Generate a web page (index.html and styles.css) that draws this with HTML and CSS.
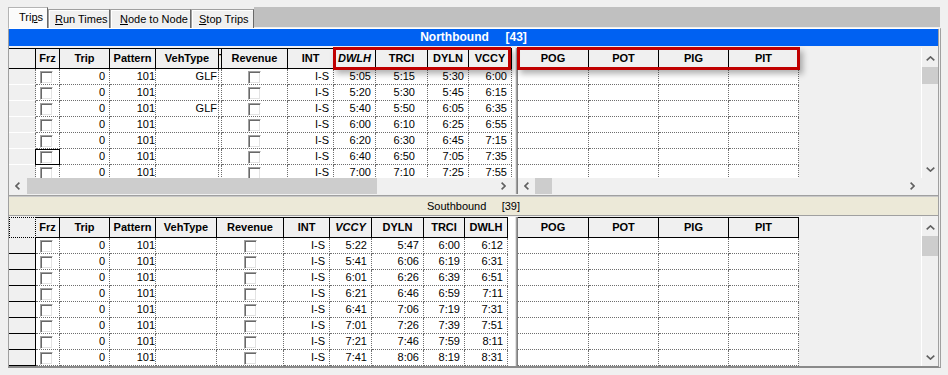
FILE: index.html
```html
<!DOCTYPE html>
<html>
<head>
<meta charset="utf-8">
<link rel="stylesheet" href="styles.css">
</head>
<body>
<div class="app">
  <div class="tabstrip">
    <div class="tab active t1">Tri<u>p</u>s</div>
    <div class="tab t2"><u>R</u>un Times</div>
    <div class="tab t3"><u>N</u>ode to Node</div>
    <div class="tab t4"><u>S</u>top Trips</div>
    <div class="tabfill"></div>
  </div>
  <div class="panel">
    <div class="bar bar-north">Northbound     [43]</div>
    <div class="gap"></div>
    <div class="section north">
      <div class="lpane grid nl">
        <div class="row hd"><div class="h"></div><div class="h">Frz</div><div class="h">Trip</div><div class="h">Pattern</div><div class="h">VehType</div><div class="h nar">T</div><div class="h">Revenue</div><div class="h">INT</div><div class="h it">DWLH</div><div class="h">TRCI</div><div class="h">DYLN</div><div class="h">VCCY</div></div>
        <div class="row"><div class="rh"></div><div class="c cbf"><span class="cb"></span></div><div class="c">0</div><div class="c">101</div><div class="c">GLF</div><div class="c"></div><div class="c cbr"><span class="cb"></span></div><div class="c">I-S</div><div class="c">5:05</div><div class="c">5:15</div><div class="c">5:30</div><div class="c">6:00</div></div>
        <div class="row"><div class="rh"></div><div class="c cbf"><span class="cb"></span></div><div class="c">0</div><div class="c">101</div><div class="c"></div><div class="c"></div><div class="c cbr"><span class="cb"></span></div><div class="c">I-S</div><div class="c">5:20</div><div class="c">5:30</div><div class="c">5:45</div><div class="c">6:15</div></div>
        <div class="row"><div class="rh"></div><div class="c cbf"><span class="cb"></span></div><div class="c">0</div><div class="c">101</div><div class="c">GLF</div><div class="c"></div><div class="c cbr"><span class="cb"></span></div><div class="c">I-S</div><div class="c">5:40</div><div class="c">5:50</div><div class="c">6:05</div><div class="c">6:35</div></div>
        <div class="row"><div class="rh"></div><div class="c cbf"><span class="cb"></span></div><div class="c">0</div><div class="c">101</div><div class="c"></div><div class="c"></div><div class="c cbr"><span class="cb"></span></div><div class="c">I-S</div><div class="c">6:00</div><div class="c">6:10</div><div class="c">6:25</div><div class="c">6:55</div></div>
        <div class="row"><div class="rh"></div><div class="c cbf"><span class="cb"></span></div><div class="c">0</div><div class="c">101</div><div class="c"></div><div class="c"></div><div class="c cbr"><span class="cb"></span></div><div class="c">I-S</div><div class="c">6:20</div><div class="c">6:30</div><div class="c">6:45</div><div class="c">7:15</div></div>
        <div class="row"><div class="rh"></div><div class="c cbf focus"><span class="cb"></span></div><div class="c">0</div><div class="c">101</div><div class="c"></div><div class="c"></div><div class="c cbr"><span class="cb"></span></div><div class="c">I-S</div><div class="c">6:40</div><div class="c">6:50</div><div class="c">7:05</div><div class="c">7:35</div></div>
        <div class="row"><div class="rh"></div><div class="c cbf"><span class="cb"></span></div><div class="c">0</div><div class="c">101</div><div class="c"></div><div class="c"></div><div class="c cbr"><span class="cb"></span></div><div class="c">I-S</div><div class="c">7:00</div><div class="c">7:10</div><div class="c">7:25</div><div class="c">7:55</div></div>
      </div>
      <div class="divider"></div>
      <div class="rpane grid rp">
        <div class="row hd"><div class="h">POG</div><div class="h">POT</div><div class="h">PIG</div><div class="h">PIT</div></div>
        <div class="row"><div class="c"></div><div class="c"></div><div class="c"></div><div class="c"></div></div>
        <div class="row"><div class="c"></div><div class="c"></div><div class="c"></div><div class="c"></div></div>
        <div class="row"><div class="c"></div><div class="c"></div><div class="c"></div><div class="c"></div></div>
        <div class="row"><div class="c"></div><div class="c"></div><div class="c"></div><div class="c"></div></div>
        <div class="row"><div class="c"></div><div class="c"></div><div class="c"></div><div class="c"></div></div>
        <div class="row"><div class="c"></div><div class="c"></div><div class="c"></div><div class="c"></div></div>
        <div class="row"><div class="c"></div><div class="c"></div><div class="c"></div><div class="c"></div></div>
      </div>
      <div class="vscroll">
        <div class="vbtn"><svg width="9" height="5" viewBox="0 0 9 5"><path d="M0.7 4.4 L4.5 0.9 L8.3 4.4" fill="none" stroke="#606060" stroke-width="1.6"/></svg></div>
        <div class="vthumb vt-n"></div>
        <div class="vfill"></div>
        <div class="vbtn"><svg width="9" height="5" viewBox="0 0 9 5"><path d="M0.7 0.6 L4.5 4.1 L8.3 0.6" fill="none" stroke="#606060" stroke-width="1.6"/></svg></div>
      </div>
    </div>
    <div class="hrow">
      <div class="hscroll hs-left">
        <div class="hbtn"><svg width="5" height="8" viewBox="0 0 5 8"><path d="M4.4 0.6 L1 4 L4.4 7.4" fill="none" stroke="#606060" stroke-width="1.6"/></svg></div>
        <div class="hthumb ht-left"></div>
        <div class="hfill"></div>
        <div class="hbtn hbtn-end"><svg width="5" height="8" viewBox="0 0 5 8"><path d="M0.6 0.6 L4 4 L0.6 7.4" fill="none" stroke="#606060" stroke-width="1.6"/></svg></div>
      </div>
      <div class="divider"></div>
      <div class="hscroll hs-right">
        <div class="hbtn"><svg width="5" height="8" viewBox="0 0 5 8"><path d="M4.4 0.6 L1 4 L4.4 7.4" fill="none" stroke="#606060" stroke-width="1.6"/></svg></div>
        <div class="hthumb ht-right"></div>
        <div class="hfill"></div>
        <div class="hbtn"><svg width="5" height="8" viewBox="0 0 5 8"><path d="M0.6 0.6 L4 4 L0.6 7.4" fill="none" stroke="#606060" stroke-width="1.6"/></svg></div>
      </div>
      <div class="corner"></div>
    </div>
    <div class="sep"></div>
    <div class="bar bar-south">Southbound     [39]</div>
    <div class="sep2"></div>
    <div class="section south">
      <div class="lpane grid sl">
        <div class="row hd"><div class="h corner-dot"></div><div class="h">Frz</div><div class="h">Trip</div><div class="h">Pattern</div><div class="h">VehType</div><div class="h">Revenue</div><div class="h">INT</div><div class="h it">VCCY</div><div class="h">DYLN</div><div class="h">TRCI</div><div class="h">DWLH</div></div>
        <div class="row"><div class="rh"></div><div class="c cbf"><span class="cb"></span></div><div class="c">0</div><div class="c">101</div><div class="c"></div><div class="c cbr"><span class="cb"></span></div><div class="c">I-S</div><div class="c">5:22</div><div class="c">5:47</div><div class="c">6:00</div><div class="c">6:12</div></div>
        <div class="row"><div class="rh"></div><div class="c cbf"><span class="cb"></span></div><div class="c">0</div><div class="c">101</div><div class="c"></div><div class="c cbr"><span class="cb"></span></div><div class="c">I-S</div><div class="c">5:41</div><div class="c">6:06</div><div class="c">6:19</div><div class="c">6:31</div></div>
        <div class="row"><div class="rh"></div><div class="c cbf"><span class="cb"></span></div><div class="c">0</div><div class="c">101</div><div class="c"></div><div class="c cbr"><span class="cb"></span></div><div class="c">I-S</div><div class="c">6:01</div><div class="c">6:26</div><div class="c">6:39</div><div class="c">6:51</div></div>
        <div class="row"><div class="rh"></div><div class="c cbf"><span class="cb"></span></div><div class="c">0</div><div class="c">101</div><div class="c"></div><div class="c cbr"><span class="cb"></span></div><div class="c">I-S</div><div class="c">6:21</div><div class="c">6:46</div><div class="c">6:59</div><div class="c">7:11</div></div>
        <div class="row"><div class="rh"></div><div class="c cbf"><span class="cb"></span></div><div class="c">0</div><div class="c">101</div><div class="c"></div><div class="c cbr"><span class="cb"></span></div><div class="c">I-S</div><div class="c">6:41</div><div class="c">7:06</div><div class="c">7:19</div><div class="c">7:31</div></div>
        <div class="row"><div class="rh"></div><div class="c cbf"><span class="cb"></span></div><div class="c">0</div><div class="c">101</div><div class="c"></div><div class="c cbr"><span class="cb"></span></div><div class="c">I-S</div><div class="c">7:01</div><div class="c">7:26</div><div class="c">7:39</div><div class="c">7:51</div></div>
        <div class="row"><div class="rh"></div><div class="c cbf"><span class="cb"></span></div><div class="c">0</div><div class="c">101</div><div class="c"></div><div class="c cbr"><span class="cb"></span></div><div class="c">I-S</div><div class="c">7:21</div><div class="c">7:46</div><div class="c">7:59</div><div class="c">8:11</div></div>
        <div class="row"><div class="rh"></div><div class="c cbf"><span class="cb"></span></div><div class="c">0</div><div class="c">101</div><div class="c"></div><div class="c cbr"><span class="cb"></span></div><div class="c">I-S</div><div class="c">7:41</div><div class="c">8:06</div><div class="c">8:19</div><div class="c">8:31</div></div>
      </div>
      <div class="divider"></div>
      <div class="rpane grid rp">
        <div class="row hd"><div class="h">POG</div><div class="h">POT</div><div class="h">PIG</div><div class="h">PIT</div></div>
        <div class="row"><div class="c"></div><div class="c"></div><div class="c"></div><div class="c"></div></div>
        <div class="row"><div class="c"></div><div class="c"></div><div class="c"></div><div class="c"></div></div>
        <div class="row"><div class="c"></div><div class="c"></div><div class="c"></div><div class="c"></div></div>
        <div class="row"><div class="c"></div><div class="c"></div><div class="c"></div><div class="c"></div></div>
        <div class="row"><div class="c"></div><div class="c"></div><div class="c"></div><div class="c"></div></div>
        <div class="row"><div class="c"></div><div class="c"></div><div class="c"></div><div class="c"></div></div>
        <div class="row"><div class="c"></div><div class="c"></div><div class="c"></div><div class="c"></div></div>
        <div class="row"><div class="c"></div><div class="c"></div><div class="c"></div><div class="c"></div></div>
      </div>
      <div class="vscroll">
        <div class="vbtn"><svg width="9" height="5" viewBox="0 0 9 5"><path d="M0.7 4.4 L4.5 0.9 L8.3 4.4" fill="none" stroke="#606060" stroke-width="1.6"/></svg></div>
        <div class="vthumb vt-s"></div>
        <div class="vfill"></div>
        <div class="vbtn"><svg width="9" height="5" viewBox="0 0 9 5"><path d="M0.7 0.6 L4.5 4.1 L8.3 0.6" fill="none" stroke="#606060" stroke-width="1.6"/></svg></div>
      </div>
    </div>
  </div>
  <div class="hl hl1"></div>
  <div class="hl hl2"></div>
</div>
</body>
</html>
```
FILE: styles.css
```css
* { box-sizing: border-box; }
html, body { margin: 0; background: #f0f0f0; }
body { font-family: "Liberation Sans", Arial, sans-serif; font-size: 11px; color: #000; }
.app { position: relative; width: 948px; height: 375px; overflow: hidden; padding: 7px 0 0 8px; }

/* tabs */
.tabstrip { display: flex; align-items: flex-end; height: 21px; width: 932px; }
.tab { height: 19px; padding-top: 3px; line-height: 13px; white-space: nowrap;
  background: #f0f0f0; border: 1px solid #a0a0a0; border-bottom: 0; border-right-color: #696969;
  box-shadow: inset 1px 1px 0 #fff; }
.tab.active { height: 21px; background: #fbfbfb; border-color: #b4b4b4; border-right-color: #696969; }
.t1 { width: 40px; padding-left: 10px; }
.t2 { width: 62px; padding-left: 6px; }
.t3 { width: 81px; padding-left: 9px; }
.t4 { width: 63px; padding-left: 7px; }
.tabfill { flex: 1; align-self: flex-start; height: 20px; background: #c0c0c0; }

/* panel */
.panel { width: 933px; border-top: 1px solid #fff; border-left: 1px solid #a0a0a0;
  border-right: 3px double #a0a0a0; border-bottom: 2px solid #8a8a8a; }
.bar { white-space: pre; text-align: center; }
.bar-north { height: 17px; line-height: 17px; background: #0061f2; color: #fff; font-weight: bold; font-size: 12px; }
.gap { height: 2px; background: #f0f0f0; }
.section { display: flex; }
.north { height: 130px; }
.south { height: 149px; }
.lpane { width: 506px; background: #fff; overflow: hidden; }
.rpane { width: 403px; background: #f0f0f0; overflow: hidden; }
.divider { width: 3px; background: linear-gradient(90deg, #e3e3e3 0 1px, #a0a0a0 1px 2px, #808080 2px 3px); }

/* grid */
.grid .row { display: grid; height: 16px; }
.grid .row.hd { height: 21px; }
.nl .row { grid-template-columns: 27px 24px 50px 46px 63px 3px 66px 46px 42px 52px 41px 43px; width: 503px; }
.sl .row { grid-template-columns: 27px 24px 50px 46px 61px 67px 46px 42px 52px 41px 43px; width: 499px; }
.rp .row { grid-template-columns: 71px 70px 70px 70px; width: 281px; }

.c { background: #fff; border-right: 1px dotted #6e6e6e; border-bottom: 1px dotted #6e6e6e;
  text-align: right; padding-right: 4px; line-height: 15px; white-space: nowrap; }
.h { background: #f0f0f0; border-top: 1px solid #000; border-bottom: 1px solid #000; border-right: 1px solid #000;
  text-align: center; font-weight: bold; line-height: 19px; white-space: nowrap; overflow: hidden; }
.h.nar { text-align: left; padding-left: 0; }
.it { font-style: italic; }
.rh { background: #f0f0f0; border-right: 1px dotted #6e6e6e; border-bottom: 1px solid #fff; }
.sl .rh { border-right: 1px solid #000; border-bottom: 1px solid #000; }
.h.corner-dot { border: 1px dotted #000; }

.nl .c:nth-child(4), .sl .c:nth-child(4) { padding-right: 0; }
.nl .c:nth-child(5), .sl .c:nth-child(5) { padding-right: 1px; }
.nl .c:nth-child(6) { padding-right: 0; }
.nl .c:nth-child(10) { padding-right: 12px; }

.cbf { padding: 2px 0 0 4px; display: flex; align-items: flex-start; }
.cbr { padding: 2px 0 0 0; display: flex; justify-content: center; align-items: flex-start; }
.cb { display: block; width: 13px; height: 13px; background: #fff;
  border-top: 1px solid #a0a0a0; border-left: 1px solid #a0a0a0;
  border-bottom: 1px solid #fff; border-right: 1px solid #fff;
  box-shadow: inset 1px 1px 0 #696969, inset -1px -1px 0 #e3e3e3; }
.focus { position: relative; }
.focus::after { content: ""; position: absolute; top: 0; left: -1px; right: -1px; bottom: -1px; border: 1px solid #000; }

/* scrollbars */
.vscroll { width: 17px; border-left: 1px solid #fff; background: #f0f0f0; display: flex; flex-direction: column; padding-top: 2px; }
.vbtn { height: 17px; display: flex; align-items: center; justify-content: center; flex: none; }
.vthumb { background: #cdcdcd; flex: none; }
.vt-n { height: 17px; }
.vt-s { height: 20px; }
.vfill { flex: 1; }
.vbtn svg, .hbtn svg { display: block; }

.hrow { display: flex; height: 16px; }
.hscroll { display: flex; background: #f0f0f0; }
.hs-left { width: 506px; }
.hs-right { width: 403px; }
.hbtn { width: 17px; display: flex; align-items: center; justify-content: center; flex: none; }
.hbtn-end { margin-right: 3px; }
.hthumb { background: #cdcdcd; flex: none; }
.ht-left { width: 350px; margin-left: 1px; }
.ht-right { width: 17px; }
.hfill { flex: 1; }
.corner { width: 17px; background: #f0f0f0; }

.sep { height: 3px; background: linear-gradient(#f0f0f0 0 1px, #a0a0a0 1px 2px, #c8c8c8 2px 3px); }
.bar-south { height: 18px; line-height: 18px; background: #ece9d8; color: #000; }
.sep2 { height: 2px; background: linear-gradient(#a0a0a0 0 1px, #f0f0f0 1px 2px); }

/* annotation highlights */
.hl { position: absolute; top: 47px; height: 23px; border: 3px solid #c00000; box-shadow: 3px 4px 6px rgba(0,0,0,0.3); }
.hl1 { left: 333px; width: 178px; }
.hl2 { left: 517px; width: 283px; }
```
